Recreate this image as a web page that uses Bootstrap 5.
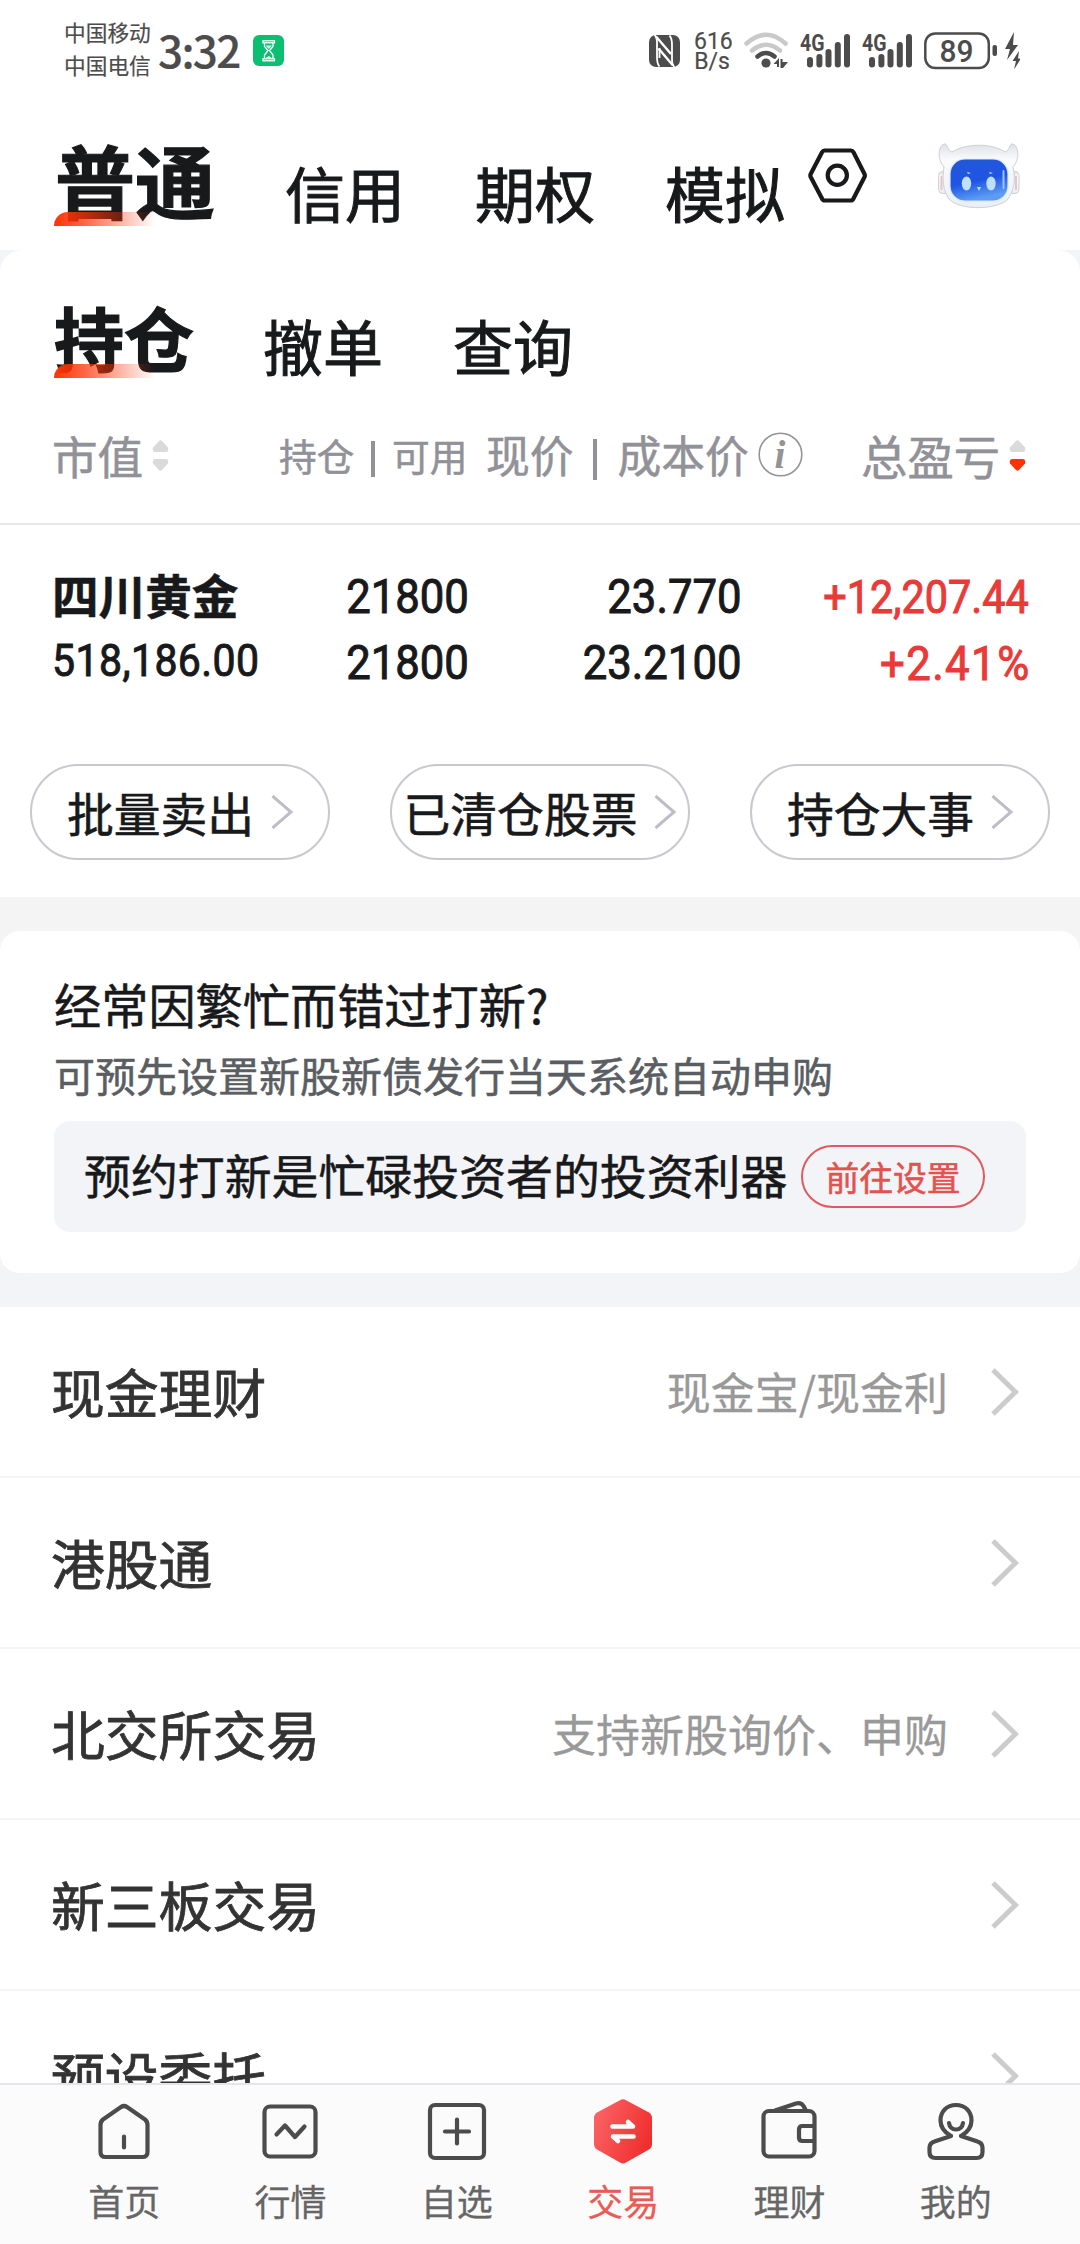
<!DOCTYPE html>
<html lang="zh-CN">
<head>
<meta charset="utf-8">
<meta name="viewport" content="width=device-width, initial-scale=1">
<title>交易</title>
<link rel="stylesheet" href="https://cdn.jsdelivr.net/npm/bootstrap@5.3.0/dist/css/bootstrap.min.css">
<style>
  body{font-family:"Noto Sans CJK SC",sans-serif;color:#18191b;background:#f3f4f8;width:1080px;height:2244px;overflow:hidden;-webkit-text-stroke:.55px currentColor}
  svg{display:block;flex:none;-webkit-text-stroke:0}
  .num{font-family:Roboto,"Noto Sans CJK SC",sans-serif;font-weight:400;-webkit-text-stroke:1px currentColor}
  .statusbar{height:104px;padding:0 60px 0 64px;color:#4c4c4c;-webkit-text-stroke:.2px currentColor}
  .carrier{font-size:21.7px;line-height:33px;padding-top:15px;width:94px}
  .clock{font-size:44px;line-height:50px;padding-top:24px;width:95px;letter-spacing:-1.7px;font-weight:500}
  .speed{font-family:Roboto,sans-serif;font-size:23px;line-height:20px;width:36px;padding-top:32px}
  .maintabs{height:146px;padding:34px 60px 0 55px}
  .t-on{position:relative;font-weight:700;white-space:nowrap;-webkit-text-stroke:1.2px currentColor}
  .t-on::after{content:"";position:absolute;left:-1px;width:101px;height:14px;border-top-left-radius:14px;background:linear-gradient(90deg,#ff3205 0,rgba(255,50,5,.75) 30%,rgba(255,50,5,0) 100%)}
  .maintabs .t-on{font-size:80px;line-height:80px}
  .maintabs .t-on::after{top:74px}
  .t-off{font-size:60px;line-height:60px;white-space:nowrap;-webkit-text-stroke:1px currentColor}
  .maintabs .t-off{margin-top:24px}
  .tabgap{gap:70px}
  .sheet{border-radius:22px 22px 0 0;height:647px}
  .subtabs{height:150px;padding:52px 54px 0}
  .subtabs .t-on{font-size:70px;line-height:70px;margin-right:-1px}
  .subtabs .t-on::after{top:62px;left:0}
  .subtabs .t-off{margin-top:13px}
  .heads{height:125px;padding:0 54px 13px 52px;color:#919198;border-bottom:2px solid #e7e8ea;white-space:nowrap}
  .vbar{display:inline-flex;width:1em;height:1em;justify-content:center;align-items:center;vertical-align:-.16em}
  .vbar i{width:4px;height:.95em;background:currentColor}
  .h-a{width:227px;font-size:45.6px}
  .h-b{width:207px;font-size:37.7px}
  .h-c{font-size:43.8px}
  .h-d{font-size:46.3px}
  .hold{padding:39px 51px 0 52px;font-size:48px;line-height:66px;white-space:nowrap}
  .sq{display:inline-block;transform:scaleX(.91);transform-origin:100% 50%}
  .sq-l{transform-origin:0 50%;letter-spacing:.5px}
  .sq-w{letter-spacing:1.6px;margin-right:-1.6px}
  .c1{width:215px}.c2{width:202px}.c3{width:273px}
  .stock{font-size:46.6px;line-height:59px;font-weight:700}
  .mv{font-size:45px;line-height:76px}
  .rise{color:#e93a38}
  .acts{padding:65px 30px 0;gap:60px}
  .pillbtn{width:300px;height:96px;border:2px solid #c8c8cf;border-radius:48px;font-size:46.8px;line-height:88px;padding:0;gap:17px;white-space:nowrap;color:#18191b}
  .pillbtn svg{margin-top:-1px}
  .band{background:#f4f4f4;padding-top:34px}
  .promo{height:342px;border-radius:20px;border:0;padding:47px 54px 0}
  .promo-t{font-size:47.2px;line-height:52px}
  .promo-s{font-size:41px;line-height:50px;color:#5a5e62;margin-top:19px}
  .promo-b{height:111px;margin-top:22px;background:#f3f4f8;border-radius:16px;padding:0 41px 0 30px;font-size:46.9px;white-space:nowrap}
  .promo-b .lbl{line-height:104px;padding-bottom:5px}
  .gobtn{width:184px;height:63px;border:2px solid #df5b5d;border-radius:32px;color:#e4524f;font-size:33.8px;line-height:56px;padding:0}
  .menu{margin-top:34px;height:776px;overflow:hidden;border-radius:0}
  .menu .list-group-item{height:171px;flex:none;border:0;border-bottom:2px solid #f3f4f5;padding:0 61px 0 51px;font-size:53.8px;line-height:160px;color:#333;white-space:nowrap}
  .menu .list-group-item>span{margin-top:-2px;-webkit-text-stroke-width:.8px}
  .menu .list-group-item>.hint{font-size:44px;color:#999;margin-right:43px;margin-top:-1px;-webkit-text-stroke-width:.3px}
  .dock{height:161px;background:#fbfbfc;border-top:2px solid #e4e5e9;padding:12px 41px 0;color:#666;-webkit-text-stroke-width:.3px}
  .dock .nav-link{padding:0;color:#666;font-size:36px;line-height:42px}
  .dock .nav-link svg{margin-bottom:14px}
  .dock .nav-link.on{color:#e85c55}
</style>
<script src="https://cdn.jsdelivr.net/npm/bootstrap@5.3.0/dist/js/bootstrap.bundle.min.js"></script>
</head>
<body class="d-flex flex-column">

<header class="bg-white">
  <div class="statusbar d-flex align-items-start">
    <div class="carrier">中国移动<br>中国电信</div>
    <div class="clock">3:32</div>
    <svg style="margin-top:35px" width="31" height="31" viewBox="0 0 31 31"><rect width="31" height="31" rx="6" fill="#0ac070"/><g fill="none" stroke="#fff" stroke-width="1.300"><rect x="10" y="5.800" width="11.500" height="2"/><rect x="10" y="23.800" width="11.500" height="2"/><path d="M11.500 8v3.500l3.500 4-3.500 4.500v3.500M20 8v3.500l-3.500 4 3.500 4.500v3.500"/></g><path d="M12.500 10.500h6.500l-3.200 3.500zM12 23.500l3.800-2.500 3.700 2.500z" fill="#d8fbe9"/></svg>
    <div class="ms-auto d-flex align-items-start">
      <svg style="margin:35px 14px 0 0" width="31" height="32" viewBox="0 0 31 32"><rect width="31" height="32" rx="7" fill="#4c4c4c"/><g fill="none" stroke="#fff" stroke-width="1.800"><path d="M5.500 0Q8 2 8 8v14q0 7 2.500 9.500M25.500 32Q23 30 23 24V10Q23 3 20.500.5"/><path d="M7 1.500 22 19M9.500 13.500 24 30.500" stroke-width="2.400"/><path d="M10.500 13v10"/></g></svg>
      <div class="speed text-center">616<br>B/s</div>
      <svg style="margin:32px 0 0 14px" width="44" height="38" viewBox="0 0 44 38"><g fill="none" stroke-linecap="round" stroke-width="4.500"><path d="M2.500 11.500Q22-6 41.500 11.500M8 18.500Q22 7 36 18.500" stroke="#c9c9c9"/><path d="M13.500 24.500Q22 17.500 30.500 24.500" stroke="#4c4c4c"/></g><circle cx="22" cy="31" r="4.600" fill="#4c4c4c"/><path d="M29.500 32 35 26v9h-2v-3zM36.500 27h2v3H44l-5 6h-2.500z" fill="#4c4c4c"/></svg>
      <svg style="margin:22px 0 0 10px" width="52" height="48" viewBox="-2 -10 52 48" fill="#4c4c4c"><text x="0" y="18.500" font-family="Roboto,sans-serif" font-weight="700" font-size="23" textLength="24.500" lengthAdjust="spacingAndGlyphs">4G</text><rect x="7" y="25" width="6" height="10.500" rx="3"/><rect x="16.400" y="22" width="6" height="13.500" rx="3"/><rect x="25.500" y="17" width="6" height="18.500" rx="3"/><rect x="34.800" y="10" width="6" height="25.500" rx="3"/><rect x="44" y="2" width="6" height="33.500" rx="3"/></svg>
      <svg style="margin:22px 0 0 10px" width="52" height="48" viewBox="-2 -10 52 48" fill="#4c4c4c"><text x="0" y="18.500" font-family="Roboto,sans-serif" font-weight="700" font-size="23" textLength="24.500" lengthAdjust="spacingAndGlyphs">4G</text><rect x="7" y="25" width="6" height="10.500" rx="3"/><rect x="16.400" y="22" width="6" height="13.500" rx="3"/><rect x="25.500" y="17" width="6" height="18.500" rx="3"/><rect x="34.800" y="10" width="6" height="25.500" rx="3"/><rect x="44" y="2" width="6" height="33.500" rx="3"/></svg>
      <svg style="margin:32px 0 0 12px" width="96" height="38" viewBox="0 0 96 38" fill="#4c4c4c"><rect x="1.300" y="1.500" width="63.500" height="34.500" rx="10" fill="none" stroke="#4c4c4c" stroke-width="2.500"/><text x="32.500" y="30" text-anchor="middle" font-family="Roboto,sans-serif" font-weight="500" font-size="31.500" textLength="34" lengthAdjust="spacingAndGlyphs">89</text><rect x="68.500" y="13" width="4.500" height="11" rx="2"/><path d="M90 0 81 17h5l-3 11 11-15h-5zM95 19l-6.500 10h3.500l-2 8.500 7-11h-3z"/></svg>
    </div>
  </div>
  <nav class="maintabs d-flex align-items-start">
    <div class="d-flex align-items-start tabgap">
      <div class="t-on">普通</div><div class="t-off">信用</div><div class="t-off">期权</div><div class="t-off">模拟</div>
    </div>
    <svg style="margin:10px 0 0 23px" width="59" height="55" viewBox="0 0 59 55" fill="none" stroke="#18191b" stroke-width="4.200" stroke-linejoin="round"><path d="M16.500 2.500h26.500q1.500 0 2.500 1.800L56.500 26q.7 1.500 0 3L45.500 50.500q-1 2-2.500 2H16.500q-1.500 0-2.500-2L2.700 29q-.7-1.500 0-3L14 4.300q1-1.800 2.500-1.800z"/><circle cx="29.300" cy="27.300" r="9.600"/></svg>
    <svg class="ms-auto" style="margin-top:5px" width="82" height="66" viewBox="0 0 82 66"><defs><linearGradient id="face" x1="0" y1="0" x2=".3" y2="1"><stop offset="0" stop-color="#2457d8"/><stop offset=".6" stop-color="#1e55e3"/><stop offset="1" stop-color="#5c9cf3"/></linearGradient><linearGradient id="shell" x1="0" y1="0" x2="0" y2="1"><stop offset="0" stop-color="#dde1e8"/><stop offset=".25" stop-color="#fafbfc"/><stop offset="1" stop-color="#e9eff7"/></linearGradient></defs>
      <g fill="url(#shell)" stroke="#cfd0d4" stroke-width="1"><rect x=".6" y="28.500" width="11" height="22" rx="4"/><rect x="70" y="28.500" width="11" height="22" rx="4"/><path d="M6 24C-1 17 0 3 6 1c4-1 3 7 8 8C28 0 54 0 67 9c5-1 4-9 8-8 6 2 7 16 0 23 3 12 1 24-5 32-10 11-48 12-59 0C5 48 4 36 6 24z"/></g>
      <path d="M3.500 33v14M78 33v14" stroke="#e5c6c4" stroke-width="2"/>
      <rect x="12" y="16" width="58" height="42" rx="15" fill="url(#face)" stroke="#dbe6fa" stroke-width="1.200"/><path d="M65.500 28v17" stroke="#9cc4fa" stroke-width="2" stroke-linecap="round"/>
      <g fill="#bfe0fb"><ellipse cx="28.500" cy="40.500" rx="4.700" ry="7"/><ellipse cx="53" cy="40.500" rx="4.700" ry="7"/><path d="M39 44h4l-2 4zM29 29l4 1-3 1zM51 29l4 1-3 1z"/></g></svg>
  </nav>
</header>

<section class="sheet bg-white">
  <nav class="subtabs d-flex align-items-start tabgap">
    <div class="t-on">持仓</div><div class="t-off">撤单</div><div class="t-off">查询</div>
  </nav>
  <div class="heads d-flex align-items-center">
    <div class="h-a d-flex align-items-center">市值<svg style="margin:1px 0 0 9px" width="17" height="31" viewBox="0 0 17 31" fill="#dadada"><path d="M1 7.500 7 1Q8.500-.5 10 1L16 7.500Q17 12 14 12H3Q0 12 1 7.500zM1 23.500 7 30Q8.500 31.500 10 30L16 23.500Q17 19 14 19H3Q0 19 1 23.500z"/></svg></div>
    <div class="h-b">持仓<span class="vbar"><i></i></span>可用</div>
    <div class="h-c">现价<span class="vbar"><i></i></span>成本价</div>
    <svg style="margin:-2px 0 0 9px" width="45" height="45" viewBox="0 0 45 45"><circle cx="22.500" cy="22.500" r="21.300" fill="none" stroke="#949494" stroke-width="1.600"/><text x="22" y="35.500" text-anchor="middle" font-family="Liberation Serif,serif" font-style="italic" font-weight="700" font-size="39" fill="#949494">i</text></svg>
    <div class="h-d ms-auto d-flex align-items-center">总盈亏<svg style="margin:1px 0 0 9px" width="17" height="31" viewBox="0 0 17 31"><path d="M1 7.500 7 1Q8.500-.5 10 1L16 7.500Q17 12 14 12H3Q0 12 1 7.500z" fill="#dadada"/><path d="M1 23.500 7 30Q8.500 31.500 10 30L16 23.500Q17 19 14 19H3Q0 19 1 23.500z" fill="#ff3205"/></svg></div>
  </div>
  <div class="hold d-flex">
    <div class="c1"><div class="stock">四川黄金</div><div class="mv num"><span class="sq sq-l">518,186.00</span></div></div>
    <div class="c2 num text-end"><span class="sq">21800</span><br><span class="sq">21800</span></div>
    <div class="c3 num text-end"><span class="sq">23.770</span><br><span class="sq">23.2100</span></div>
    <div class="num text-end rise ms-auto"><span class="sq" style="font-size:45.5px">+12,207.44</span><br><span class="sq sq-w">+2.41%</span></div>
  </div>
  <div class="acts d-flex">
    <button class="btn pillbtn d-flex align-items-center justify-content-center">批量卖出<svg width="22" height="34" viewBox="0 0 22 34"><path d="M1.500 1 20 17 1.500 33" fill="none" stroke="#bdbdc6" stroke-width="3"/></svg></button>
    <button class="btn pillbtn d-flex align-items-center justify-content-center">已清仓股票<svg width="22" height="34" viewBox="0 0 22 34"><path d="M1.500 1 20 17 1.500 33" fill="none" stroke="#bdbdc6" stroke-width="3"/></svg></button>
    <button class="btn pillbtn d-flex align-items-center justify-content-center">持仓大事<svg width="22" height="34" viewBox="0 0 22 34"><path d="M1.500 1 20 17 1.500 33" fill="none" stroke="#bdbdc6" stroke-width="3"/></svg></button>
  </div>
</section>

<section class="band">
  <div class="card promo">
    <div class="promo-t">经常因繁忙而错过打新?</div>
    <div class="promo-s">可预先设置新股新债发行当天系统自动申购</div>
    <div class="promo-b d-flex align-items-center justify-content-between"><span class="lbl">预约打新是忙碌投资者的投资利器</span><button class="btn gobtn">前往设置</button></div>
  </div>
</section>

<div class="list-group menu bg-white">
  <div class="list-group-item d-flex align-items-center"><span>现金理财</span><span class="hint ms-auto">现金宝/现金利</span><svg width="28" height="48" viewBox="0 0 28 48"><path d="M2 2 24.500 24 2 46" fill="none" stroke="#ccc" stroke-width="5"/></svg></div>
  <div class="list-group-item d-flex align-items-center"><span class="me-auto">港股通</span><svg width="28" height="48" viewBox="0 0 28 48"><path d="M2 2 24.500 24 2 46" fill="none" stroke="#ccc" stroke-width="5"/></svg></div>
  <div class="list-group-item d-flex align-items-center"><span>北交所交易</span><span class="hint ms-auto">支持新股询价、申购</span><svg width="28" height="48" viewBox="0 0 28 48"><path d="M2 2 24.500 24 2 46" fill="none" stroke="#ccc" stroke-width="5"/></svg></div>
  <div class="list-group-item d-flex align-items-center"><span class="me-auto">新三板交易</span><svg width="28" height="48" viewBox="0 0 28 48"><path d="M2 2 24.500 24 2 46" fill="none" stroke="#ccc" stroke-width="5"/></svg></div>
  <div class="list-group-item d-flex align-items-center"><span class="me-auto">预设委托</span><svg width="28" height="48" viewBox="0 0 28 48"><path d="M2 2 24.500 24 2 46" fill="none" stroke="#ccc" stroke-width="5"/></svg></div>
</div>

<nav class="dock nav nav-fill flex-nowrap">
  <a class="nav-link nav-item w-100 d-flex flex-column align-items-center"><svg width="68" height="68" viewBox="0 0 68 68" fill="none" stroke="#4c4c4c" stroke-width="4.200" stroke-linecap="round" stroke-linejoin="round"><path d="M13 22.500Q10.500 24.500 10.500 28V55q0 5 5 5h37q5 0 5-5V28q0-3.500-2.500-5.500L37 10q-3-2-6 0zM34 39.500v11"/></svg>首页</a>
  <a class="nav-link nav-item w-100 d-flex flex-column align-items-center"><svg width="68" height="68" viewBox="0 0 68 68" fill="none" stroke="#4c4c4c" stroke-width="4.200" stroke-linecap="round" stroke-linejoin="round"><rect x="8.500" y="9.500" width="51" height="50" rx="5.500"/><path d="m20.500 37.500 8.500-9 10 11.500 9.500-10.500"/></svg>行情</a>
  <a class="nav-link nav-item w-100 d-flex flex-column align-items-center"><svg width="68" height="68" viewBox="0 0 68 68" fill="none" stroke="#4c4c4c" stroke-width="4.200" stroke-linecap="round" stroke-linejoin="round"><rect x="7" y="8" width="54" height="53" rx="5"/><path d="M22 34.500h24M34 22.500v24"/></svg>自选</a>
  <a class="nav-link nav-item w-100 on d-flex flex-column align-items-center"><svg width="68" height="68" viewBox="0 0 68 68"><defs><linearGradient id="hx" x1="0" y1=".3" x2="1" y2=".7"><stop offset="0" stop-color="#fb6264"/><stop offset="1" stop-color="#f02b2b"/></linearGradient></defs><path d="M31 3.200q3-2 6 0L60 15.500q3 2 3 5.500v26q0 3.500-3 5.500L37 65.500q-3 2-6 0L8 52.500q-3-2-3-5.500V21q0-3.500 3-5.500z" fill="url(#hx)"/><path d="M23.500 29.500H44L39 25M44.500 39.500H24l5 4.500" fill="none" stroke="#fff" stroke-width="4.600" stroke-linecap="round" stroke-linejoin="round"/></svg>交易</a>
  <a class="nav-link nav-item w-100 d-flex flex-column align-items-center"><svg width="68" height="68" viewBox="0 0 68 68" fill="none" stroke="#4c4c4c" stroke-width="4.200" stroke-linecap="round" stroke-linejoin="round"><rect x="8.500" y="14" width="51" height="45.500" rx="5.500"/><path d="M20 13.500 41 6.500q5-1.500 7.500 2.500l2.500 4.500M59 29H47.500q-3.500 0-3.500 3.500v8q0 3.500 3.500 3.500H59"/></svg>理财</a>
  <a class="nav-link nav-item w-100 d-flex flex-column align-items-center"><svg width="68" height="68" viewBox="0 0 68 68" fill="none" stroke="#4c4c4c" stroke-width="4.200" stroke-linecap="round"><path d="M29 39C22 35 18.500 29 18.500 23.500 18.500 14 25 8 34 8s15.500 6 15.500 15.500C49.500 29 46 35 39 39M29 39 12.500 44.500Q7.500 46 7.500 51v4q0 6 6 6h41q6 0 6-6v-4q0-5-5-6.500L39 39M27 26q1 6.500 7 6.500t7-6.500"/></svg>我的</a>
</nav>
</body>
</html>
